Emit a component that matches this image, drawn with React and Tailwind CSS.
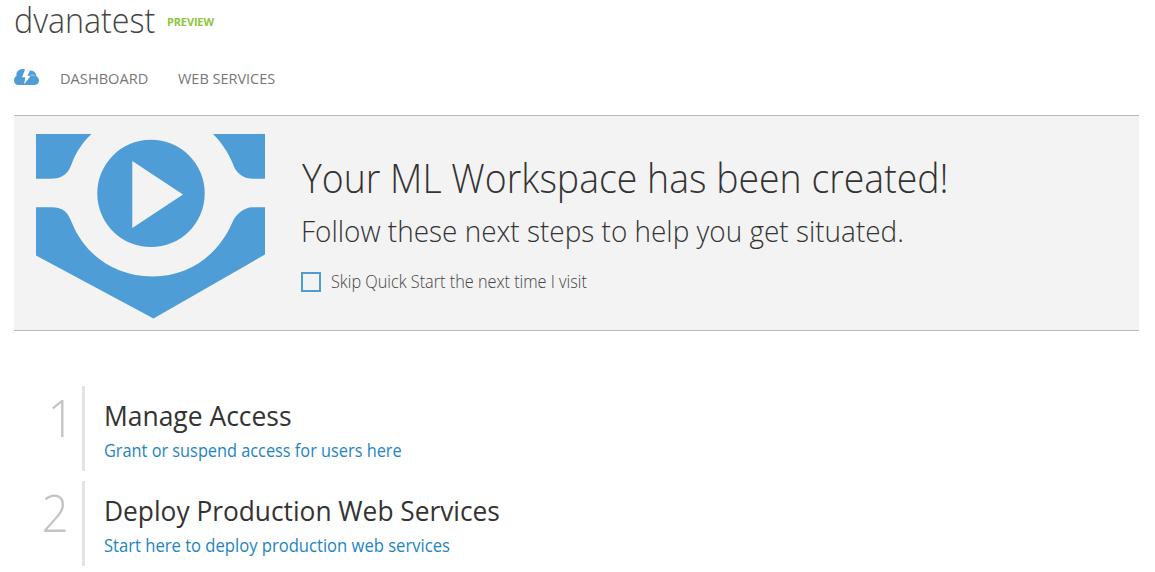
const STEPS = [
  {
    number: '1',
    title: 'Manage Access',
    link: 'Grant or suspend access for users here',
    numberInset: 'pr-[7px]',
    titleScale: 'scale-x-[0.944]',
    linkScale: 'scale-x-[0.906]',
  },
  {
    number: '2',
    title: 'Deploy Production Web Services',
    link: 'Start here to deploy production web services',
    numberInset: 'pr-[13px]',
    titleScale: 'scale-x-[0.939]',
    linkScale: 'scale-x-[0.922]',
  },
];

function CloudIcon() {
  return (
    <svg className="mb-[2px] block h-4 w-[25px]" viewBox="0 0 25 16">
      <path
        fill="#4f9dd7"
        d="M4.500 16C1.800 16 0 14 0 11.200C0 9 1.300 7.500 2.500 7C1.800 3 4.800 0 8.500 0C10.200 0 12 .500 13 1.500C14 1.200 15.500 1.200 16.700 1.500C20 1.600 22.300 4 22.400 7.200C24 8 25 9.500 25 11.600C25 14.200 23.300 16 20.500 16Z"
      />
      <path fill="#fff" d="M11.200 0L8 8.300H11.300L10.200 15.200L16.600 6.800H13.400L16.200 1.300H14L13 1.500L12.600 0Z" />
      <path fill="none" stroke="#fff" strokeOpacity="0.8" strokeWidth="0.8" d="M17.200 6.400C18.200 5.700 19.600 5.900 20.600 6.600" />
    </svg>
  );
}

function QuickStartLogo() {
  return (
    <svg className="block h-[185px] w-[229px] shrink-0" viewBox="0 0 229 185" fill="#4f9dd7">
      <path d="M0 0H55.500C47 8 40 18 36 29C32.500 39 28 44.700 14 44.700H0Z" />
      <path d="M229 0H177C185 8 192 18 196.500 29C200 39 206 44.700 218 44.700H229Z" />
      <path d="M0 73.300H15C28 73.300 32 79 36 89C49 121 79 142.500 116.500 142.500C154 142.500 183 120 196.500 88C200 80 209 73.300 216 73.300H229V120.500L117.500 184.500L0 121.500Z" />
      <path fillRule="evenodd" d="M115 5.700A53.700 53.700 0 1 1 115 113.100A53.700 53.700 0 1 1 115 5.700ZM96.300 27V94L147 60.500Z" />
    </svg>
  );
}

function Step({ number, title, link, numberInset, titleScale, linkScale }) {
  return (
    <li className="flex h-[85px]">
      <div className={`w-[68px] shrink-0 pt-px text-right text-[52px] font-light leading-[60px] text-[#c4c4c4] ${numberInset}`}>
        <span className="inline-block origin-right scale-x-[0.92]">{number}</span>
      </div>
      <div className="border-l-[3px] border-[#e3e3e3] pl-[19px] pt-[11px] whitespace-nowrap">
        <h2 className={`origin-left text-[28px] leading-9 text-[#333] ${titleScale}`}>{title}</h2>
        <a href="#" className={`mt-[5px] block w-max origin-left text-[18px] leading-6 text-[#1e85c1] ${linkScale}`}>
          {link}
        </a>
      </div>
    </li>
  );
}

export default function App() {
  return (
    <div className="h-[572px] overflow-hidden bg-white px-[14px] font-['Open_Sans','Noto_Sans',sans-serif]">
      <header className="flex h-[38px] items-start whitespace-nowrap">
        <div className="w-[153px]">
          <h1 className="w-max origin-left scale-x-[0.92] text-[35px] font-light leading-10 text-[#444]">dvanatest</h1>
        </div>
        <span className="pt-[12px] text-[11px] font-bold tracking-[-0.15px] leading-5 text-[#8cc63f]">PREVIEW</span>
      </header>
      <nav className="mt-[30px] flex h-5 items-center whitespace-nowrap text-[15px] leading-5 text-[#777]">
        <CloudIcon />
        <a href="#" className="ml-[21px] w-[118px] origin-left scale-x-[0.975]">DASHBOARD</a>
        <a href="#" className="origin-left scale-x-[0.965]">WEB SERVICES</a>
      </nav>
      <section className="mt-[27px] flex h-[216px] w-[1125px] border-y border-[#b9b9b9] bg-[#f3f3f3] pl-[22px] pt-[18px]">
        <QuickStartLogo />
        <div className="ml-[36px] pt-[20px] whitespace-nowrap text-[#333]">
          <h2 className="ml-px w-max origin-left scale-x-[0.936] text-[40px] font-light leading-[48px]">Your ML Workspace has been created!</h2>
          <p className="mt-[9px] w-max origin-left scale-x-[0.931] text-[30px] font-light leading-10">Follow these next steps to help you get situated.</p>
          <label className="mt-[18px] flex h-6 items-center text-[18px] font-light leading-6 text-[#444]">
            <input type="checkbox" className="mt-[2px] mr-[10px] size-5 appearance-none border-2 border-[#4f9dd0] bg-[#f3f3f3]" />
            <span className="origin-left scale-x-[0.903]">Skip Quick Start the next time I visit</span>
          </label>
        </div>
      </section>
      <ol className="mt-[55px] flex flex-col gap-[10px]">
        {STEPS.map((step) => (
          <Step key={step.number} {...step} />
        ))}
      </ol>
    </div>
  );
}
